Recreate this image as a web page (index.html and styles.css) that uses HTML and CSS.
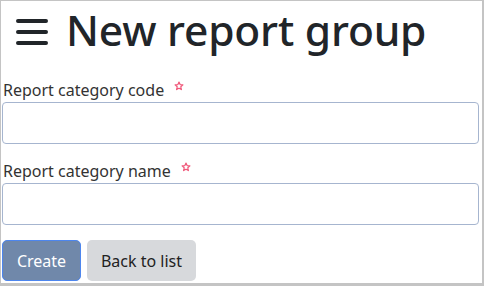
FILE: index.html
```html
<!DOCTYPE html>
<html lang="en">
<head>
    <meta charset="UTF-8">
    <title>New report group</title>
    <link rel="stylesheet" href="styles.css">
</head>
<body>
    <div class="frame">
        <header class="page-head">
            <svg class="menu-icon" width="32" height="28" viewBox="0 0 32 28">
                <path d="M2 4h28M2 15h28M2 26h28" stroke="#212529" stroke-width="4" stroke-linecap="round" fill="none"/>
            </svg>
            <h1>New report group</h1>
        </header>

        <form class="report-form">
            <div class="field">
                <label for="code">Report category code
                    <svg class="req" width="10" height="10" viewBox="0 0 10 10"><path d="M5 1l1.1 2.6 2.8.3-2.1 1.9.6 2.8L5 7.2 2.6 8.6l.6-2.8L1.1 3.9l2.8-.3z" fill="none" stroke="#f0587a" stroke-width="1.2" stroke-linejoin="round"/></svg>
                </label>
                <input type="text" id="code">
            </div>
            <div class="field">
                <label for="name">Report category name
                    <svg class="req" width="10" height="10" viewBox="0 0 10 10"><path d="M5 1l1.1 2.6 2.8.3-2.1 1.9.6 2.8L5 7.2 2.6 8.6l.6-2.8L1.1 3.9l2.8-.3z" fill="none" stroke="#f0587a" stroke-width="1.2" stroke-linejoin="round"/></svg>
                </label>
                <input type="text" id="name">
            </div>
            <div class="actions">
                <button type="submit" class="btn btn-primary">Create</button>
                <button type="button" class="btn btn-secondary">Back to list</button>
            </div>
        </form>
    </div>
</body>
</html>
```

FILE: styles.css
```css
* {
    margin: 0;
    padding: 0;
    box-sizing: border-box;
}

body {
    font-family: "Noto Sans", "Open Sans", sans-serif;
    color: #212529;
    background: #fff;
}

/* moldura */
.frame {
    width: 484px;
    height: 286px;
    border: solid #c4c4c4;
    border-width: 1px 2px 3px 1px;
    padding: 0 3px 0 1px;
}

.page-head {
    display: flex;
    align-items: center;
    gap: 18px;
    height: 58px;
    padding-left: 14px;
}

.menu-icon {
    display: block;
    margin-top: 2px;
}

.page-head h1 {
    font-size: 42.5px;
    font-weight: 500;
    line-height: 1;
    letter-spacing: -0.2px;
}

/* formulário */
.report-form {
    padding-top: 19px;
}

.field {
    margin-bottom: 15px;
}

.field label {
    display: block;
    font-size: 16px;
    color: #333;
    line-height: 24px;
    padding-left: 1px;
}

.req {
    vertical-align: top;
    margin-left: 6px;
    margin-top: 3px;
}

.field input {
    display: block;
    width: 100%;
    height: 42px;
    border: 1px solid #a6b5cf;
    border-radius: 4px;
    font-size: 16px;
    padding: 6px 12px;
}

.field:last-of-type {
    margin-bottom: 13px;
}

.actions {
    display: flex;
    gap: 6px;
}

.btn {
    font-family: inherit;
    font-size: 16px;
    height: 41px;
    padding: 0 10px;
    border-radius: 5px;
    border: 1px solid transparent;
}

.btn-primary {
    background-color: #7088aa;
    border-color: #4d86ee;
    color: #fff;
    width: 79px;
}

.btn-secondary {
    background-color: #d7d9dc;
    color: #222;
    width: 109px;
}
```
